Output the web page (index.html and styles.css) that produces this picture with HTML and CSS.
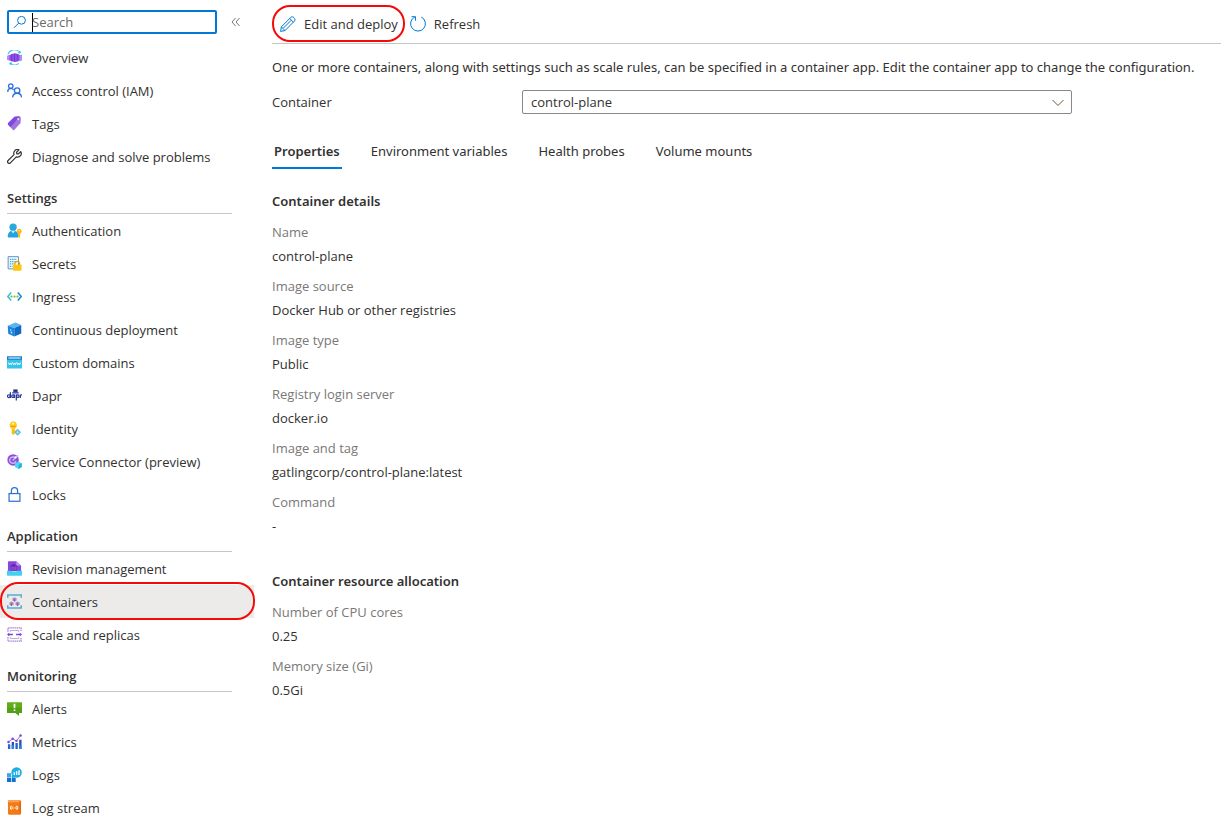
FILE: index.html
```html
<!DOCTYPE html>
<html lang="en">
<head>
    <meta charset="UTF-8">
    <meta name="viewport" content="width=device-width, initial-scale=1.0">
    <title>Containers - Container App</title>
    <link rel="stylesheet" href="styles.css">
</head>
<body>
    <div class="layout">
        <aside class="sidebar">
            <div class="search-row">
                <div class="search-box">
                    <svg class="search-icon" viewBox="0 0 14 14"><circle cx="8.5" cy="5.3" r="3.9"/><path d="M5.7 8.1 1 12.8"/></svg>
                    <span class="caret"></span>
                    <input type="text" placeholder="Search" aria-label="Search">
                </div>
                <button class="collapse-btn" type="button" aria-label="Collapse menu">
                    <svg viewBox="0 0 10 10"><path d="M4.5 1 1 5l3.5 4M8.5 1 5 5l3.5 4"/></svg>
                </button>
            </div>

            <nav>
                <a class="nav-item" href="#">
                    <svg class="icon" viewBox="0 0 16 16">
                        <path d="M1 4.500A7.400 7.400 0 0 1 12 1M15.300 5A7.400 7.400 0 0 1 14.500 12M12.500 14.200A7.400 7.400 0 0 1 4 14.800" fill="none" stroke="#50c8e8" stroke-width="1.2"/>
                        <path d="M0 6.300l3-1 2-1 3.500-.8 3.500.8 1.500 1 2.500 1v4l-2.500 1-1.500.8-3.500.7-3.500-.7-2-.8-3-1z" fill="#8f50ea"/>
                        <path d="M5 4.500v7.500M8 4v8.500M11 4.500v7.500" stroke="#7136d0" stroke-width=".9"/>
                        <path d="M0 6.300l2.500-.8v5.600l-2.500-.8zM13.500 5.500l2.500.8v4l-2.500.8z" fill="#b98af7"/>
                        <circle cx="13.300" cy="2.400" r="1.400" fill="#32c8e6"/><circle cx="4" cy="14.400" r="1.400" fill="#32c8e6"/>
                    </svg>
                    Overview
                </a>
                <a class="nav-item" href="#">
                    <svg class="icon" viewBox="0 0 16 16" fill="none" stroke="#2a70e0" stroke-width="1.4">
                        <circle cx="4" cy="3.300" r="2.400"/><circle cx="10.800" cy="8" r="2.900"/>
                        <path d="M.7 9.500C.9 7 2 5.900 4 5.800c1.400 0 2.500.5 3.100 1.500M6 15.300c.2-2.900 2-4.400 4.800-4.400s4.500 1.500 4.700 4.400"/>
                    </svg>
                    Access control (IAM)
                </a>
                <a class="nav-item" href="#">
                    <svg class="icon" viewBox="0 0 16 16">
                        <path d="M1.200 7.500 8 .9 13.500.3l1.300 1.300-.3 5.900-6.800 7.300c-.4.400-.9.400-1.300 0L1.200 9.300c-.5-.5-.5-1.200 0-1.800z" fill="#a078dc"/>
                        <path d="M1.200 7.500 8 .9 13.500.3 3.800 12 1.200 9.300c-.5-.5-.5-1.200 0-1.800z" fill="#8348df"/>
                        <circle cx="12" cy="3.300" r="1.100" fill="#e6d6ff"/>
                    </svg>
                    Tags
                </a>
                <a class="nav-item" href="#">
                    <svg class="icon" viewBox="0 0 16 16">
                        <path d="M14.600 2.800 12 5.300l-1.500-.2-.3-1.600L12.800.9C10.900.2 9 .7 8 2.200c-.9 1.200-1 2.500-.5 3.800l-6.300 6.300c-.8.800-.8 1.800-.1 2.500s1.800.7 2.500 0l6.300-6.400c1.400.5 2.700.3 3.900-.6 1.500-1.100 1.800-3.200.8-5z" fill="none" stroke="#333" stroke-width="1.3" stroke-linejoin="round"/>
                    </svg>
                    Diagnose and solve problems
                </a>

                <h2 class="nav-heading">Settings</h2>
                <a class="nav-item" href="#">
                    <svg class="icon" viewBox="0 0 16 16">
                        <path d="M.7 14.500C1 10.300 3 8 6.500 8s5.600 2.300 5.900 6.500c0 .5-.4.900-.9.900h-10c-.5 0-.8-.4-.8-.9z" fill="#24a3e4"/>
                        <path d="M4.300 8.200 6.500 11l2.200-2.800z" fill="#e8f6ff"/>
                        <circle cx="6.500" cy="4.400" r="3.900" fill="#2aa9dc"/>
                        <circle cx="13" cy="8.800" r="2.600" fill="#ffb515"/><path d="M12 10.500h2V15l-1 .9-1-.9z" fill="#ffb515"/><circle cx="13" cy="8.100" r=".6" fill="#fff"/>
                    </svg>
                    Authentication
                </a>
                <a class="nav-item" href="#">
                    <svg class="icon" viewBox="0 0 16 16">
                        <path d="M1.200.7h11v13h-11z" fill="#f2faff" stroke="#5590b8"/>
                        <path d="M3 3.500h7.500M3 6h7.500M3 8.500h5M3 11h3" stroke="#47a8df" stroke-width="1.3" stroke-dasharray="1.6 .8"/>
                        <path d="M8.500 9.500V8.300a2.500 2.500 0 0 1 5 0v1.200" fill="none" stroke="#eda400" stroke-width="1.3"/>
                        <rect x="6.500" y="9.200" width="9" height="6.500" rx=".7" fill="#ffc50d"/>
                    </svg>
                    Secrets
                </a>
                <a class="nav-item" href="#">
                    <svg class="icon" viewBox="0 0 16 16" fill="none">
                        <path d="M4.500 3.800.8 8l3.700 4.200" stroke="#35b9e9" stroke-width="1.6"/><path d="M11.500 3.800 15.200 8l-3.700 4.200" stroke="#1683d8" stroke-width="1.6"/>
                        <g fill="#72c72e"><circle cx="4.800" cy="8" r="1.200"/><circle cx="8" cy="8" r="1.200"/><circle cx="11.200" cy="8" r="1.200"/></g>
                    </svg>
                    Ingress
                </a>
                <a class="nav-item" href="#">
                    <svg class="icon" viewBox="0 0 16 16">
                        <path d="M.8 4 9 .5l6.200 2.800-7.400 3.200z" fill="#56b6f3"/>
                        <path d="M.8 4l7 2.500v9L1.300 12.500z" fill="#1c83dc"/>
                        <path d="M7.800 6.500 15.200 3.300v8.900l-7.400 3.300z" fill="#1269c4"/>
                        <path d="M3.300 7.500l1.300.5v1.500l-1.300-.4zM4 10l1.500.5v2l-1.500-.7z" fill="#c8eaff"/>
                    </svg>
                    Continuous deployment
                </a>
                <a class="nav-item" href="#">
                    <svg class="icon" viewBox="0 0 16 16">
                        <rect y="1.500" width="16" height="13" rx=".7" fill="#35c3e8"/><path d="M0 1.500h16V5H0z" fill="#1679ce"/>
                        <path d="M1.500 3.200h13" stroke="#e6f7ff" stroke-width="1.2"/>
                        <path d="M1.500 8l1 2.500 1-2 1 2 1-2.500M6 8l1 2.500 1-2 1 2 1-2.500M10.500 8l1 2.500 1-2 1 2 1-2.500" fill="none" stroke="#fff" stroke-width=".9"/>
                    </svg>
                    Custom domains
                </a>
                <a class="nav-item" href="#">
                    <svg class="icon" viewBox="0 0 16 16" fill="none" stroke="#243692" stroke-width="1.3">
                        <path d="M6.700 1.500h4.600v3H6.700z" fill="#243692" stroke="none"/><path d="M5.500 5.200h7"/>
                        <circle cx="2" cy="8.700" r="1.500"/><path d="M3.600 4.500v6.200"/><circle cx="6.400" cy="8.700" r="1.400"/><path d="M7.900 7v3.700M9.900 7v6.400"/><circle cx="11.400" cy="8.700" r="1.400"/><path d="M14.200 7v3.700M14.200 8.200c.2-.8.800-1 1.800-1"/>
                    </svg>
                    Dapr
                </a>
                <a class="nav-item" href="#">
                    <svg class="icon" viewBox="0 0 16 16">
                        <path d="M6.500.3a4.300 4.300 0 0 1 2 8l-.2 1 .9.9-.9 1 .9 1-2 2.800L5 13.500V8.300A4.300 4.300 0 0 1 6.500.3z" fill="#ffca1c"/>
                        <circle cx="6.600" cy="2.800" r="1.100" fill="#fff4cc"/><path d="M4 5.800h5.200" stroke="#e39b00"/><path d="M6.300 9v4.500" stroke="#eda800" stroke-width=".8"/>
                        <path d="M11.300 8.200 15 12l-3.700 3.700L7.600 12z" fill="#5bb8d5"/><path d="M11.300 10v4M9.300 12h4" stroke="#d8f5ff" stroke-width=".6"/>
                    </svg>
                    Identity
                </a>
                <a class="nav-item" href="#">
                    <svg class="icon" viewBox="0 0 16 16">
                        <circle cx="6.500" cy="6.300" r="6.100" fill="#8950d8"/>
                        <path d="M8.800 4.300A3.400 3.400 0 1 0 9.500 7.500M6 7l6-5.500" fill="none" stroke="#d5b6ff" stroke-width="1.5"/><circle cx="9" cy="3.600" r="1.100" fill="#fff"/>
                        <path d="M8.500 9.800 12.300 8l3.500 1.800v4L12.300 16l-3.800-2.200z" fill="#50d5f3"/><path d="M12.300 11.500 15.800 9.800v4L12.300 16z" fill="#24b6da"/>
                    </svg>
                    Service Connector (preview)
                </a>
                <a class="nav-item" href="#">
                    <svg class="icon" viewBox="0 0 16 16" fill="none" stroke="#2a70d4" stroke-width="1.3"><rect x="2.200" y="7" width="11.600" height="8.200"/><path d="M4.700 7V4a3.300 3.300 0 0 1 6.600 0v3"/></svg>
                    Locks
                </a>

                <h2 class="nav-heading">Application</h2>
                <a class="nav-item" href="#">
                    <svg class="icon" viewBox="0 0 16 16">
                        <path d="M1 1.500C1 .8 1.500.3 2.200.3H10l5 4.500V11H1z" fill="#8a45e0"/><path d="M10 .3l5 4.500h-5z" fill="#c49af5"/>
                        <path d="M4 10V5l3-2 3.500 2v5z" fill="#5f2cae"/><path d="M5.300 9.500V6M7.300 9.500V6M9.300 9.500V6" stroke="#ac78f0" stroke-width=".8"/>
                        <path d="M0 10.500h5l1 1h4l1-1h5V15c0 .5-.3.800-.8.800H.8c-.5 0-.8-.3-.8-.8z" fill="#43d1f0"/>
                    </svg>
                    Revision management
                </a>
                <a class="nav-item active" href="#" aria-current="page">
                    <svg class="icon" viewBox="0 0 16 16">
                        <path d="M.8 4V1h14.400v3M.8 12v3h14.400v-3" fill="none" stroke="#4fb0d8" stroke-width="1.7"/>
                        <g fill="#ae8ac6"><path d="M8 3.500l2.200 1.100v2.300L8 8 5.800 6.900V4.600z"/><path d="M4.800 8l2.300 1v2.400l-2.300 1.100-2.200-1.100V9z"/><path d="M11.200 8l2.300 1v2.400l-2.300 1.100L9 11.400V9z"/></g>
                        <path d="M8 5.700V8M4.800 10v2.500M11.200 10v2.500" stroke="#7b5597" stroke-width="1.2"/>
                    </svg>
                    Containers
                </a>
                <a class="nav-item" href="#">
                    <svg class="icon" viewBox="0 0 16 16" fill="none" stroke="#a47be0">
                        <path d="M1 5V1h14v4M1 11v4h14v-4" stroke-width="1.3" stroke-dasharray="1.5 .7"/><path d="M3.500 5.200V3.700h9v1.500M3.500 10.800v1.500h9v-1.500" stroke="#b5a8c4"/>
                        <path d="M.8 8h5.500M9.700 8h5.500" stroke="#813ee0" stroke-width="1.4"/><path d="M2.500 6.300.8 8l1.700 1.700M13.500 6.300 15.200 8l-1.700 1.700" stroke="#813ee0"/>
                    </svg>
                    Scale and replicas
                </a>

                <h2 class="nav-heading">Monitoring</h2>
                <a class="nav-item" href="#">
                    <svg class="icon" viewBox="0 0 16 16"><path d="M.5 1.300h15c.3 0 .5.200.5.500v10.400c0 .3-.2.500-.5.500h-2.700v3L9 12.700H.5c-.3 0-.5-.2-.5-.5V1.800c0-.3.200-.5.500-.5z" fill="#62ad1c"/><path d="M0 7h16v5.200c0 .3-.2.500-.5.500h-2.700v3L9 12.700H.5c-.3 0-.5-.2-.5-.5z" fill="#549f18"/><path d="M7 2.800h2l-.2 5H7.200zM7.200 9h1.700v1.600H7.200z" fill="#fff"/></svg>
                    Alerts
                </a>
                <a class="nav-item" href="#">
                    <svg class="icon" viewBox="0 0 16 16">
                        <path d="M1 11h2.500v5H1zM9 9.500h2.500V16H9z" fill="#2763c9"/><path d="M5 8.500h2.500V16H5zM13 6h2.500v10H13z" fill="#2854ab"/><path d="M5 12h2.500v4H5zM13 12h2.500v4H13z" fill="#2783e5"/>
                        <path d="M1.500 8.500 6 5l4 2.500L14.500 1.500" fill="none" stroke="#9a65db" stroke-width="1"/><g fill="#8044d8"><circle cx="1.600" cy="8.500" r="1.300"/><circle cx="6" cy="5" r="1.300"/><circle cx="10" cy="7.300" r="1.300"/><circle cx="14.500" cy="1.600" r="1.300"/></g>
                    </svg>
                    Metrics
                </a>
                <a class="nav-item" href="#">
                    <svg class="icon" viewBox="0 0 16 16">
                        <path d="M0 7h4.300v4H0zM0 11.600h4.300V16H0zM5 11.600h4.300V16H5z" fill="#1671cc"/><path d="M0 7h4.300v4H0z" fill="#37a6ed"/>
                        <circle cx="10.200" cy="5.800" r="5.600" fill="#20aee2"/><path d="M4.800 10.200l2-3 1.800 3.700-3 1.100z" fill="#20aee2"/><path d="M7.800 5.500v3M10.300 4.500v4M12.800 3.500v5" stroke="#fff" stroke-width="1.5"/>
                    </svg>
                    Logs
                </a>
                <a class="nav-item" href="#">
                    <svg class="icon" viewBox="0 0 16 16"><rect x="1" y=".3" width="14" height="15.400" rx="1.200" fill="#f27b16"/><path d="M2.200.3H13v2H1v-.8C1 .8 1.500.3 2.200.3z" fill="#f9a25c"/><path d="M14 2v12" stroke="#d95d07"/><g fill="none" stroke="#fff" stroke-width="1"><ellipse cx="4.600" cy="8.300" rx="1" ry="1.700"/><ellipse cx="10.500" cy="8.300" rx="1" ry="1.700"/><path d="M6.800 8.500H8"/></g></svg>
                    Log stream
                </a>
            </nav>
        </aside>

        <main class="content">
            <div class="toolbar">
                <button class="tool-btn highlighted" type="button">
                    <svg viewBox="0 0 16 16"><path d="M1.400 10.800 11 1.200c1.700-1.500 5.100 1.600 3.600 3.700L5 14.600l-4.400.8zM9.700 2.500l3.700 3.700M1.400 10.800 5 14.600M11.200 4.300 3.500 12"/></svg>
                    Edit and deploy
                </button>
                <button class="tool-btn" type="button">
                    <svg viewBox="0 0 16 16"><path d="M11.200 1a7.400 7.400 0 1 1-6.400 0M1.500.7h4v4"/></svg>
                    Refresh
                </button>
            </div>

            <p class="intro">One or more containers, along with settings such as scale rules, can be specified in a container app. Edit the container app to change the configuration.</p>

            <div class="field">
                <label for="container">Container</label>
                <div class="select-box">
                    <select id="container">
                        <option>control-plane</option>
                    </select>
                    <svg class="chevron" viewBox="0 0 12 8"><path d="M.5 1 6 6.500 11.500 1"/></svg>
                </div>
            </div>

            <div class="tabs" role="tablist">
                <button class="tab selected" type="button" role="tab" aria-selected="true">Properties</button>
                <button class="tab" type="button" role="tab">Environment variables</button>
                <button class="tab" type="button" role="tab">Health probes</button>
                <button class="tab" type="button" role="tab">Volume mounts</button>
            </div>

            <section class="details">
                <h3>Container details</h3>
                <dl>
                    <dt>Name</dt>
                    <dd>control-plane</dd>
                    <dt>Image source</dt>
                    <dd>Docker Hub or other registries</dd>
                    <dt>Image type</dt>
                    <dd>Public</dd>
                    <dt>Registry login server</dt>
                    <dd>docker.io</dd>
                    <dt>Image and tag</dt>
                    <dd>gatlingcorp/control-plane:latest</dd>
                    <dt>Command</dt>
                    <dd>-</dd>
                </dl>
            </section>

            <section class="details">
                <h3>Container resource allocation</h3>
                <dl>
                    <dt>Number of CPU cores</dt>
                    <dd>0.25</dd>
                    <dt>Memory size (Gi)</dt>
                    <dd>0.5Gi</dd>
                </dl>
            </section>
        </main>
    </div>
</body>
</html>
```
FILE: styles.css
```css
* {
    margin: 0;
    padding: 0;
    box-sizing: border-box;
}

body {
    font-family: "Open Sans", "Noto Sans", sans-serif;
    font-size: 13px;
    line-height: 20px;
    color: #323130;
    background: #fff;
}

button,
input,
select {
    font: inherit;
    color: inherit;
    background: none;
    border: none;
}

.layout {
    display: flex;
}

/* Sidebar */
.sidebar {
    width: 254px;
    flex-shrink: 0;
}

.search-row {
    display: flex;
    align-items: center;
    gap: 14px;
    height: 41px;
    padding: 3px 0 0 7px;
}

.search-box {
    display: flex;
    align-items: center;
    width: 210px;
    height: 24px;
    border: 2px solid #0078d4;
    border-radius: 2px;
    padding-left: 4px;
}

.search-icon {
    width: 14px;
    height: 14px;
    margin-right: 5px;
    fill: none;
    stroke: #0078d4;
}

.caret {
    width: 1px;
    height: 19px;
    margin-right: -1px;
    background: #000;
}

.search-box input {
    flex: 1;
    min-width: 0;
    height: 20px;
    outline: none;
}

.search-box input::placeholder {
    color: #6b6967;
    opacity: 1;
}

.collapse-btn {
    width: 10px;
    height: 20px;
}

.collapse-btn svg {
    display: block;
    width: 10px;
    height: 10px;
    margin: 5px 0;
    fill: none;
    stroke: #777;
}

.nav-item {
    display: flex;
    align-items: center;
    gap: 10px;
    height: 33px;
    padding-left: 7px;
    color: inherit;
    text-decoration: none;
}

.nav-item .icon {
    width: 15px;
    height: 15px;
}

.nav-heading {
    height: 41px;
    margin: 0 22px 0 7px;
    padding-top: 15px;
    border-bottom: 1px solid #c8c6c4;
    font-size: 13px;
    font-weight: 600;
}

.nav-item.active {
    position: relative;
    background: #edebe9;
}

/* Red outlines around the two highlighted controls */
.nav-item.active::after,
.tool-btn.highlighted::after {
    content: "";
    position: absolute;
    inset: -3px -1px -2px 0;
    border: 2px solid #f50a0a;
    border-radius: 18px;
}

/* Content */
.content {
    flex: 1;
    min-width: 0;
    padding-left: 18px;
}

.toolbar {
    display: flex;
    gap: 6px;
    height: 44px;
    padding: 8px 0 3px 8px;
    border-bottom: 1px solid #c8c6c4;
}

.tool-btn {
    position: relative;
    display: flex;
    align-items: center;
    gap: 8px;
    padding-right: 6px;
    cursor: pointer;
}

.tool-btn svg {
    width: 16px;
    height: 16px;
    fill: none;
    stroke: #0078d4;
}

.tool-btn.highlighted::after {
    inset: -3px -1px -2px -8px;
}

.intro,
.tabs,
.details h3 {
    font-family: "Noto Sans", sans-serif;
}

.intro {
    margin-top: 13px;
}

.field {
    display: flex;
    align-items: center;
    margin-top: 13px;
}

.field label {
    width: 250px;
}

.select-box {
    position: relative;
    width: 550px;
}

.select-box select {
    display: block;
    width: 100%;
    height: 24px;
    padding: 0 28px 0 8px;
    border: 1px solid #8a8886;
    border-radius: 2px;
    appearance: none;
}

.chevron {
    position: absolute;
    top: 9px;
    right: 8px;
    width: 12px;
    height: 8px;
    fill: none;
    stroke: #75523a;
    pointer-events: none;
}

.tabs {
    display: flex;
    gap: 27px;
    margin-top: 20px;
}

.tab {
    height: 35px;
    padding: 0 2px;
    border-bottom: 2px solid transparent;
    cursor: pointer;
}

.tab.selected {
    border-color: #0078d4;
    font-weight: 600;
}

.details {
    margin-top: 22px;
}

.details + .details {
    margin-top: 35px;
}

.details h3 {
    margin-bottom: 11px;
    font-size: 13px;
    font-weight: 600;
}

.details dt {
    color: #7a7876;
}

.details dd {
    margin: 4px 0 10px;
}

.details dd:last-child {
    margin-bottom: 0;
}
```
